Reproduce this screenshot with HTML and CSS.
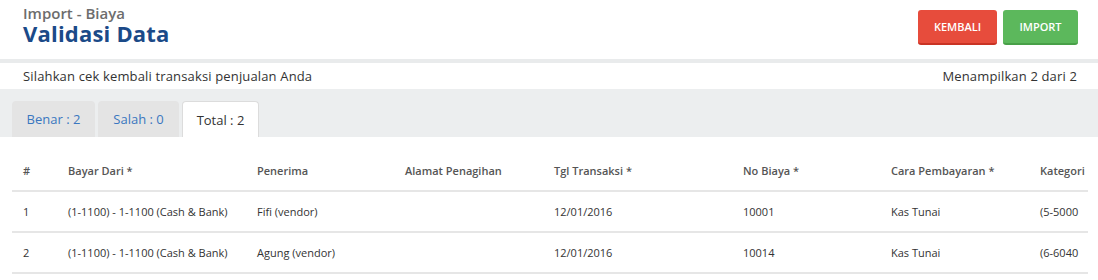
FILE: index.html
```html
<!DOCTYPE html>
<html>
<head>
<meta charset="utf-8">
<link rel="stylesheet" href="styles.css">
</head>
<body>
<header class="page-header">
  <div class="titles">
    <div class="subtitle">Import - Biaya</div>
    <h1 class="title">Validasi Data</h1>
  </div>
  <div class="actions">
    <button class="btn btn-red">KEMBALI</button>
    <button class="btn btn-green">IMPORT</button>
  </div>
</header>
<div class="info-bar">
  <span>Silahkan cek kembali transaksi penjualan Anda</span>
  <span>Menampilkan 2 dari 2</span>
</div>
<nav class="tabs">
  <div class="tab tab-benar">Benar : 2</div>
  <div class="tab tab-salah">Salah : 0</div>
  <div class="tab active">Total : 2</div>
</nav>
<div class="table-wrap">
  <table class="data">
    <colgroup>
      <col class="c-no"><col class="c-wide"><col class="c-mid"><col class="c-mid2"><col class="c-wide"><col class="c-mid"><col class="c-mid2"><col class="c-last">
    </colgroup>
    <thead>
      <tr><th>#</th><th>Bayar Dari *</th><th>Penerima</th><th>Alamat Penagihan</th><th>Tgl Transaksi *</th><th>No Biaya *</th><th>Cara Pembayaran *</th><th>Kategori</th></tr>
    </thead>
    <tbody>
      <tr><td>1</td><td>(1-1100) - 1-1100 (Cash &amp; Bank)</td><td>Fifi (vendor)</td><td></td><td>12/01/2016</td><td>10001</td><td>Kas Tunai</td><td>(5-5000</td></tr>
      <tr><td>2</td><td>(1-1100) - 1-1100 (Cash &amp; Bank)</td><td>Agung (vendor)</td><td></td><td>12/01/2016</td><td>10014</td><td>Kas Tunai</td><td>(6-6040</td></tr>
    </tbody>
  </table>
</div>
</body>
</html>
```
FILE: styles.css
```css
* { box-sizing: border-box; }
html, body { margin: 0; padding: 0; background: #fff; }
body {
  font-family: "Open Sans", "Noto Sans", sans-serif;
  color: #333;
  width: 1098px;
  height: 280px;
  overflow: hidden;
}
.page-header {
  height: 59px;
  display: flex;
  justify-content: space-between;
  align-items: flex-start;
  padding: 0 20px 0 23px;
  border-bottom: 4px solid #e9ebec;
  box-sizing: content-box;
}
.titles { padding-top: 5px; }
.subtitle {
  font-size: 15px;
  font-weight: 600;
  color: #6d6d6d;
  line-height: 16px;
}
.title {
  margin: 0;
  font-size: 22px;
  font-weight: 700;
  color: #1b4a88;
  line-height: 24px;
  letter-spacing: 0.2px;
}
.actions {
  display: flex;
  gap: 6px;
  padding-top: 10px;
}
.btn {
  border: 0;
  border-radius: 3px;
  height: 35px;
  color: #fff;
  font-family: inherit;
  font-size: 11px;
  font-weight: 600;
  padding: 0 10px;
}
.btn-red { background: #e74c3c; border-bottom: 2px solid #c93324; width: 79px; }
.btn-green { background: #5cb85c; border-bottom: 2px solid #48a048; width: 75px; }
.info-bar {
  height: 26px;
  display: flex;
  justify-content: space-between;
  align-items: center;
  padding: 0 21px 0 23px;
  font-size: 13px;
  letter-spacing: 0.15px;
  color: #333;
}
.tabs {
  background: #eceeef;
  height: 48px;
  display: flex;
  align-items: flex-end;
  gap: 3px;
  padding-left: 12px;
}
.tab {
  height: 36px;
  display: flex;
  align-items: center;
  justify-content: center;
  white-space: nowrap;
  font-size: 13px;
  color: #3a77c0;
  background: #e4e4e4;
  border-radius: 4px 4px 0 0;
}
.tab-benar { width: 83px; }
.tab-salah { width: 81px; }
.tab.active {
  width: 77px;
  background: #fff;
  color: #333;
  border: 1px solid #dcdcdc;
  border-bottom: 0;
}
.table-wrap {
  margin: 0 10px 0 12px;
  padding-top: 13px;
  overflow: hidden;
}
.data {
  border-collapse: collapse;
  table-layout: fixed;
  width: 1076px;
}
.c-no { width: 45px; }
.c-wide { width: 189px; }
.c-mid { width: 148px; }
.c-mid2 { width: 149px; }
.c-last { width: 59px; }
.data th, .data td {
  text-align: left;
  padding: 0 0 0 11px;
  font-size: 11px;
  white-space: nowrap;
  overflow: hidden;
  border-bottom: 2px solid #e6e6e6;
}
.data th {
  height: 41px;
  font-weight: 600;
  color: #555;
}
.data td {
  height: 41px;
  color: #333;
}
```
